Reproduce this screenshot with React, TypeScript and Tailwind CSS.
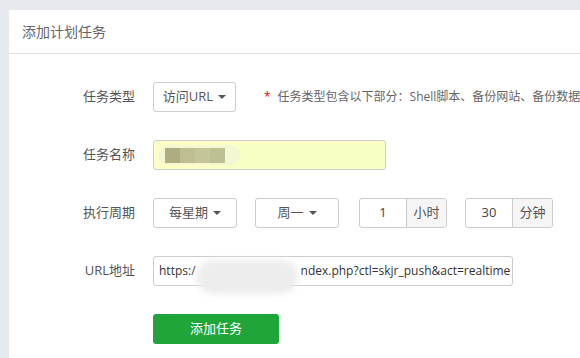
import React from 'react';

const font = "font-['Open_Sans',_'Noto_Sans_CJK_SC',_sans-serif]";

const Caret = () => (
  <span className="ml-[5px] inline-block w-0 h-0 border-x-[4px] border-t-[4px] border-x-transparent border-t-[#555]" />
);

const SelectBox = ({ label, width }: { label: string; width: string }) => (
  <div
    className={`${width} h-[30px] border border-[#ccc] rounded-[3px] flex items-center justify-center text-[13px] text-[#555] shrink-0`}
  >
    {label}
    <Caret />
  </div>
);

const InputGroup = ({ value, unit }: { value: string; unit: string }) => (
  <div className="flex h-[30px] w-[88px] border border-[#ccc] rounded-[3px] shrink-0 overflow-hidden">
    <div className="w-[47px] flex items-center justify-center text-[13px] text-[#444] border-r border-[#ccc]">
      {value}
    </div>
    <div className="flex-1 bg-[#f5f5f5] flex items-center justify-center text-[13px] text-[#555]">
      {unit}
    </div>
  </div>
);

const Row = ({ label, children }: { label: string; children: React.ReactNode }) => (
  <div className="flex items-center h-[30px] mb-[28px]">
    <div className="w-[126px] shrink-0 text-right text-[13px] text-[#555]">{label}</div>
    <div className="ml-[18px] flex items-center">{children}</div>
  </div>
);

const App = () => {
  return (
    <div className={`w-[580px] h-[358px] bg-[#e6e9ed] pt-[10px] pl-[9px] overflow-hidden ${font}`}>
      <div className="bg-white h-full w-[571px] overflow-hidden">
        <div className="h-[44px] border-b border-[#ddd] px-[13px] flex items-center text-[14px] text-[#666]">
          添加计划任务
        </div>

        <div className="pt-[28px]">
          <Row label="任务类型">
            <SelectBox label="访问URL" width="w-[83px]" />
            <span className="ml-[28px] text-[12px] text-[#ef0b0b]">*</span>
            <span className="ml-[7px] text-[12px] text-[#666] whitespace-nowrap">
              任务类型包含以下部分：Shell脚本、备份网站、备份数据
            </span>
          </Row>

          <Row label="任务名称">
            <div className="relative w-[233px] h-[30px] border border-[#ccc] rounded-[3px] bg-[#faffc4] flex items-center pl-[11px]">
              <div className="absolute left-[4px] top-[4px] w-[82px] h-[20px] rounded-full bg-[#f4f7d2]" />
              <div className="relative flex h-[15px]">
                <div className="w-[15px] bg-[#adad80]" />
                <div className="w-[15px] bg-[#bdbf92]" />
                <div className="w-[15px] bg-[#c3c698]" />
                <div className="w-[15px] bg-[#bcc193]" />
              </div>
            </div>
          </Row>

          <Row label="执行周期">
            <SelectBox label="每星期" width="w-[84px]" />
            <div className="ml-[18px]">
              <SelectBox label="周一" width="w-[84px]" />
            </div>
            <div className="ml-[20px]">
              <InputGroup value="1" unit="小时" />
            </div>
            <div className="ml-[18px]">
              <InputGroup value="30" unit="分钟" />
            </div>
          </Row>

          <Row label="URL地址">
            <div className="relative w-[360px] h-[30px] border border-[#ccc] rounded-[3px] flex items-center pl-[5px] overflow-visible">
              <div className="overflow-hidden whitespace-nowrap text-[12px] text-[#333] w-[352px]">
                <span>https:/</span>
                <span className="inline-block w-[105px]" />
                <span>ndex.php?ctl=skjr_push&amp;act=realtime</span>
              </div>
              <div className="absolute left-[42px] top-[3px] w-[102px] h-[34px] rounded-full bg-[#ededed] blur-[3px]" />
            </div>
          </Row>

          <div className="flex">
            <div className="ml-[144px] w-[126px] h-[30px] bg-[#20a53a] rounded-[3px] flex items-center justify-center text-[13px] text-white">
              添加任务
            </div>
          </div>
        </div>
      </div>
    </div>
  );
};

export default App;
